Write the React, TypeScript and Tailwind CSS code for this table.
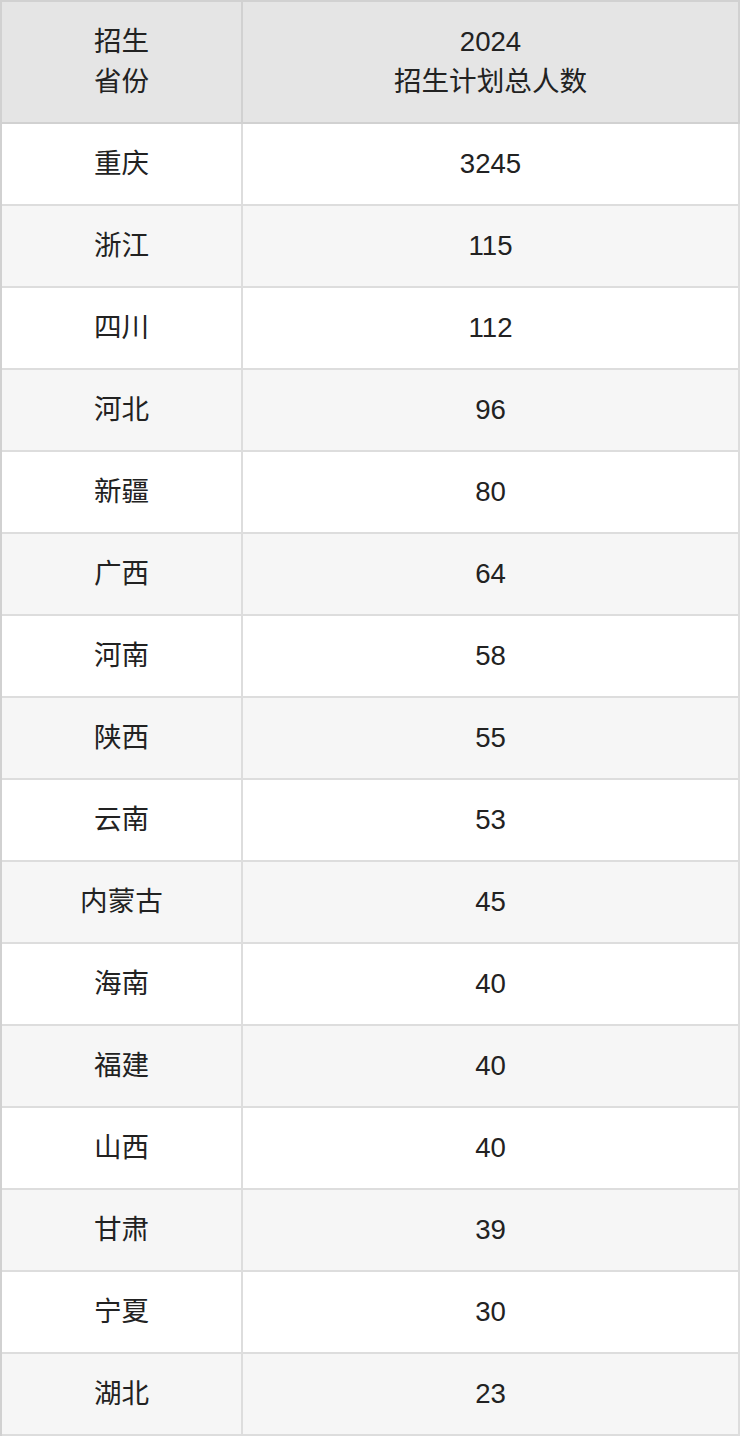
import React from "react";

const rows: [string, string][] = [
  ["重庆", "3245"],
  ["浙江", "115"],
  ["四川", "112"],
  ["河北", "96"],
  ["新疆", "80"],
  ["广西", "64"],
  ["河南", "58"],
  ["陕西", "55"],
  ["云南", "53"],
  ["内蒙古", "45"],
  ["海南", "40"],
  ["福建", "40"],
  ["山西", "40"],
  ["甘肃", "39"],
  ["宁夏", "30"],
  ["湖北", "23"],
];

export default function App() {
  return (
    <div
      className="w-[740px] bg-white text-[#222222] text-[27.6px] leading-[40px]"
      style={{ fontFamily: '"Liberation Sans", "Noto Sans CJK SC", sans-serif' }}
    >
      <div className="grid grid-cols-[241px_1fr] border-t-2 border-l-2 border-[#d1d1d1]">
        <div className="h-[122px] flex flex-col items-center justify-center bg-[#e5e5e5] border-r-2 border-b-2 border-[#d1d1d1]">
          <span>招生</span>
          <span>省份</span>
        </div>
        <div className="h-[122px] flex flex-col items-center justify-center bg-[#e5e5e5] border-r-2 border-b-2 border-[#d1d1d1]">
          <span>2024</span>
          <span>招生计划总人数</span>
        </div>
        {rows.map(([p, n], i) => {
          const bg = i % 2 === 0 ? "bg-white" : "bg-[#f6f6f6]";
          return (
            <React.Fragment key={p + i}>
              <div className={`h-[82px] flex items-center justify-center border-r-2 border-b-2 border-[#dddddd] ${bg}`}>
                {p}
              </div>
              <div className={`h-[82px] flex items-center justify-center border-r-2 border-b-2 border-[#dddddd] ${bg}`}>
                {n}
              </div>
            </React.Fragment>
          );
        })}
      </div>
    </div>
  );
}
